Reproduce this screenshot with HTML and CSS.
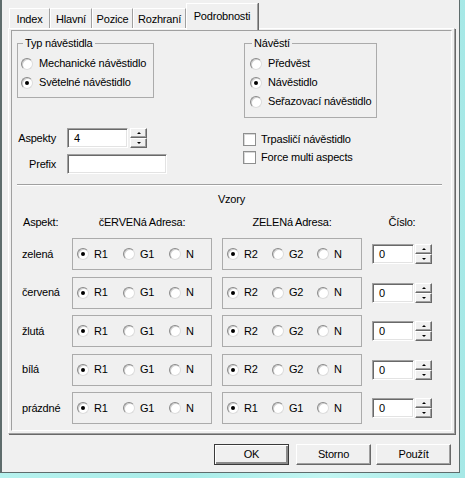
FILE: index.html
```html
<!DOCTYPE html>
<html lang="cs">
<head>
<meta charset="utf-8">
<title>Podrobnosti</title>
<link rel="stylesheet" href="styles.css">
</head>
<body>
<div class="window">
  <div class="tabs">
    <div class="tab w-index">Index</div>
    <div class="tab w-hlavni">Hlavní</div>
    <div class="tab w-pozice">Pozice</div>
    <div class="tab w-rozhrani">Rozhraní</div>
    <div class="tab tab-active w-podrob">Podrobnosti</div>
  </div>
  <div class="panel">
    <div class="frame">
      <div class="top">
        <div class="col-left">
          <fieldset class="group g-typ">
            <legend>Typ návěstidla</legend>
            <div class="radio-row"><span class="radio"></span><span>Mechanické návěstidlo</span></div>
            <div class="radio-row"><span class="radio on"></span><span>Světelné návěstidlo</span></div>
          </fieldset>
          <div class="field f-aspekty">
            <span class="flabel">Aspekty</span>
            <span class="edit e-asp">4</span>
            <span class="spin"><span class="sbtn"><span class="tri-up"></span></span><span class="sbtn"><span class="tri-down"></span></span></span>
          </div>
          <div class="field f-prefix">
            <span class="flabel">Prefix</span>
            <span class="edit e-prefix"></span>
          </div>
        </div>
        <div class="col-right">
          <fieldset class="group g-nav">
            <legend>Návěstí</legend>
            <div class="radio-row"><span class="radio"></span><span>Předvěst</span></div>
            <div class="radio-row"><span class="radio on"></span><span>Návěstidlo</span></div>
            <div class="radio-row"><span class="radio"></span><span>Seřazovací návěstidlo</span></div>
          </fieldset>
          <div class="check-row c-first"><span class="check"></span><span>Trpasličí návěstidlo</span></div>
          <div class="check-row"><span class="check"></span><span>Force multi aspects</span></div>
        </div>
      </div>
      <div class="sep"></div>
      <div class="vzory">Vzory</div>
      <div class="vhead">
        <div class="vlabel hl">Aspekt:</div>
        <div class="hcol">čERVENá Adresa:</div>
        <div class="hcol hgreen">ZELENá Adresa:</div>
        <div class="hnum">Číslo:</div>
      </div>
      <div class="vrows">
        <div class="vrow">
          <div class="vlabel">zelená</div>
          <div class="vbox"><div class="ritem r-red"><span class="radio on"></span>R1</div><div class="ritem r-red"><span class="radio"></span>G1</div><div class="ritem"><span class="radio"></span>N</div></div>
          <div class="vbox vgreen"><div class="ritem r-green"><span class="radio on"></span>R2</div><div class="ritem r-green"><span class="radio"></span>G2</div><div class="ritem"><span class="radio"></span>N</div></div>
          <div class="num"><span class="edit e-num">0</span><span class="spin"><span class="sbtn"><span class="tri-up"></span></span><span class="sbtn"><span class="tri-down"></span></span></span></div>
        </div>
        <div class="vrow">
          <div class="vlabel">červená</div>
          <div class="vbox"><div class="ritem r-red"><span class="radio on"></span>R1</div><div class="ritem r-red"><span class="radio"></span>G1</div><div class="ritem"><span class="radio"></span>N</div></div>
          <div class="vbox vgreen"><div class="ritem r-green"><span class="radio on"></span>R2</div><div class="ritem r-green"><span class="radio"></span>G2</div><div class="ritem"><span class="radio"></span>N</div></div>
          <div class="num"><span class="edit e-num">0</span><span class="spin"><span class="sbtn"><span class="tri-up"></span></span><span class="sbtn"><span class="tri-down"></span></span></span></div>
        </div>
        <div class="vrow">
          <div class="vlabel">žlutá</div>
          <div class="vbox"><div class="ritem r-red"><span class="radio on"></span>R1</div><div class="ritem r-red"><span class="radio"></span>G1</div><div class="ritem"><span class="radio"></span>N</div></div>
          <div class="vbox vgreen"><div class="ritem r-green"><span class="radio on"></span>R2</div><div class="ritem r-green"><span class="radio"></span>G2</div><div class="ritem"><span class="radio"></span>N</div></div>
          <div class="num"><span class="edit e-num">0</span><span class="spin"><span class="sbtn"><span class="tri-up"></span></span><span class="sbtn"><span class="tri-down"></span></span></span></div>
        </div>
        <div class="vrow">
          <div class="vlabel">bílá</div>
          <div class="vbox"><div class="ritem r-red"><span class="radio on"></span>R1</div><div class="ritem r-red"><span class="radio"></span>G1</div><div class="ritem"><span class="radio"></span>N</div></div>
          <div class="vbox vgreen"><div class="ritem r-green"><span class="radio on"></span>R2</div><div class="ritem r-green"><span class="radio"></span>G2</div><div class="ritem"><span class="radio"></span>N</div></div>
          <div class="num"><span class="edit e-num">0</span><span class="spin"><span class="sbtn"><span class="tri-up"></span></span><span class="sbtn"><span class="tri-down"></span></span></span></div>
        </div>
        <div class="vrow">
          <div class="vlabel">prázdné</div>
          <div class="vbox"><div class="ritem r-red"><span class="radio on"></span>R1</div><div class="ritem r-red"><span class="radio"></span>G1</div><div class="ritem"><span class="radio"></span>N</div></div>
          <div class="vbox vgreen"><div class="ritem r-green"><span class="radio on"></span>R1</div><div class="ritem r-green"><span class="radio"></span>G1</div><div class="ritem"><span class="radio"></span>N</div></div>
          <div class="num"><span class="edit e-num">0</span><span class="spin"><span class="sbtn"><span class="tri-up"></span></span><span class="sbtn"><span class="tri-down"></span></span></span></div>
        </div>
      </div>
    </div>
  </div>
  <div class="buttons">
    <div class="btn btn-default">OK</div>
    <div class="btn b-storno">Storno</div>
    <div class="btn b-pouzit">Použít</div>
  </div>
</div>
</body>
</html>
```
FILE: styles.css
```css
* { box-sizing: border-box; }
html, body { margin: 0; padding: 0; }
body {
  width: 465px;
  height: 478px;
  overflow: hidden;
  background: linear-gradient(90deg, #b6f2ee 0%, #a8ece8 40%, #c2f6f2 70%, #a6e8e6 100%);
  font-family: "Liberation Sans", Arial, sans-serif;
  font-size: 11px;
  line-height: 13px;
  letter-spacing: -0.2px;
  color: #000;
  white-space: nowrap;
}
.window {
  width: 460px;
  height: 473px;
  background: #f0f0f0;
  border-left: 2px solid #5e6c6c;
  border-right: 1px solid #5e6c6c;
  border-bottom: 1px solid #5e6c6c;
  padding: 3px 0 0 6px;
}

/* tabs */
.tabs {
  display: flex;
  align-items: flex-end;
  height: 25px;
  padding-left: 1px;
}
.tab {
  height: 20px;
  padding-top: 4px;
  text-align: center;
  border-top: 1px solid #fff;
  border-left: 1px solid #fff;
  border-right: 1px solid #a0a0a0;
  box-shadow: 1px 0 0 #696969;
  background: #f0f0f0;
}
.tab-active {
  height: 27px;
  padding-top: 6px;
  margin-bottom: -2px;
  position: relative;
  z-index: 1;
}
.w-index { width: 41px; }
.w-hlavni { width: 42px; }
.w-pozice { width: 41px; }
.w-rozhrani { width: 53px; }
.w-podrob { width: 72px; }

.panel {
  width: 447px;
  height: 406px;
  border-top: 1px solid #fff;
  border-left: 1px solid #fff;
  border-right: 1px solid #a0a0a0;
  border-bottom: 1px solid #a0a0a0;
  box-shadow: 1px 1px 0 #696969;
  padding: 1px 0 0 2px;
}
.frame {
  width: 441px;
  height: 401px;
  border-top: 1px solid #a0a0a0;
  border-left: 1px solid #a0a0a0;
  border-right: 1px solid #fff;
  border-bottom: 1px solid #fff;
}

/* top section */
.top {
  display: flex;
  height: 153px;
  padding-left: 5px;
}
.col-left { width: 227px; }
.col-right { width: 200px; }

.group {
  margin: 6px 0 0 0;
  padding: 4px 0 0 3px;
  border: 1px solid #ababab;
  min-width: 0;
}
.group legend {
  padding: 0 2px;
  margin-left: 2px;
  line-height: 13px;
}
.g-typ { width: 137px; height: 61px; }
.g-nav { width: 133px; height: 81px; padding-left: 5px; }

.radio-row {
  display: flex;
  align-items: center;
  height: 19px;
  gap: 6px;
}
.radio {
  width: 12px;
  height: 12px;
  flex: none;
  border-radius: 50%;
  background: #fff;
  border: 1px solid;
  border-color: #8a8a8a #dcdcdc #dcdcdc #8a8a8a;
  box-shadow: inset 1px 1px 0 #cfcfcf;
  display: inline-flex;
  align-items: center;
  justify-content: center;
}
.radio.on::after {
  content: "";
  width: 4px;
  height: 4px;
  border-radius: 50%;
  background: #000;
}

.field {
  display: flex;
  align-items: center;
  height: 20px;
}
.f-aspekty { margin-top: 30px; }
.f-prefix { margin-top: 6px; }
.flabel {
  width: 39px;
  text-align: right;
  margin-right: 11px;
}
.edit {
  height: 20px;
  background: #fff;
  border: 1px solid;
  border-color: #a0a0a0 #fff #fff #a0a0a0;
  box-shadow: inset 1px 1px 0 #696969, inset -1px -1px 0 #e3e3e3;
  padding: 3px 0 0 6px;
}
.e-asp { width: 61px; }
.e-prefix { width: 100px; }
.spin {
  display: flex;
  flex-direction: column;
  width: 17px;
  height: 20px;
  margin-left: 2px;
}
.sbtn {
  height: 10px;
  background: #f0f0f0;
  border: 1px solid;
  border-color: #fff #696969 #696969 #fff;
  box-shadow: inset -1px -1px 0 #a0a0a0;
  display: flex;
  align-items: center;
  justify-content: center;
}
.tri-up {
  width: 0;
  height: 0;
  border-left: 2px solid transparent;
  border-right: 2px solid transparent;
  border-bottom: 2px solid #000;
}
.tri-down {
  width: 0;
  height: 0;
  border-left: 2px solid transparent;
  border-right: 2px solid transparent;
  border-top: 2px solid #000;
}

.check-row {
  display: flex;
  align-items: center;
  height: 18px;
  gap: 5px;
  margin-left: -1px;
}
.c-first { margin-top: 12px; }
.check {
  width: 13px;
  height: 13px;
  flex: none;
  background: #fff;
  border: 1px solid #8e8f8f;
  box-shadow: inset 1px 1px 0 #d8d8d8;
}

.sep {
  margin-left: 5px;
  width: 425px;
  height: 2px;
  border-top: 1px solid #a0a0a0;
  border-bottom: 1px solid #fff;
}
.vzory {
  margin-top: 7px;
  text-align: center;
}
.vhead {
  display: flex;
  margin-top: 10px;
}
.vlabel {
  width: 60px;
  padding-left: 10px;
}
.hl { padding-left: 11px; }
.hcol { width: 140px; text-align: center; }
.hgreen { margin-left: 10px; }
.hnum { width: 60px; margin-left: 10px; text-align: center; }

.vrows {
  display: flex;
  flex-direction: column;
  gap: 6.5px;
  margin-top: 9px;
}
.vrow {
  display: flex;
  align-items: center;
  height: 32px;
}
.vbox {
  width: 140px;
  height: 32px;
  border: 1px solid #ababab;
  display: flex;
  align-items: center;
  padding-left: 4px;
}
.vgreen { margin-left: 10px; }
.ritem {
  display: flex;
  align-items: center;
  gap: 5px;
}
.r-red { width: 46px; }
.r-green { width: 45px; }
.num {
  display: flex;
  align-items: center;
  margin-left: 10px;
}
.e-num { width: 42px; }
.num .spin { margin-left: 1px; }

/* buttons */
.buttons {
  display: flex;
  margin: 10px 0 0 206px;
}
.btn {
  width: 75px;
  height: 21px;
  text-align: center;
  padding-top: 3px;
  background: #f0f0f0;
  border: 1px solid;
  border-color: #fff #696969 #696969 #fff;
  box-shadow: inset -1px -1px 0 #a0a0a0;
}
.btn-default {
  border: 1px solid #3a3a3a;
  box-shadow: inset 1px 1px 0 #fff, inset -2px -2px 0 #8a8a8a;
}
.b-storno { margin-left: 7px; }
.b-pouzit { margin-left: 5px; }
```
